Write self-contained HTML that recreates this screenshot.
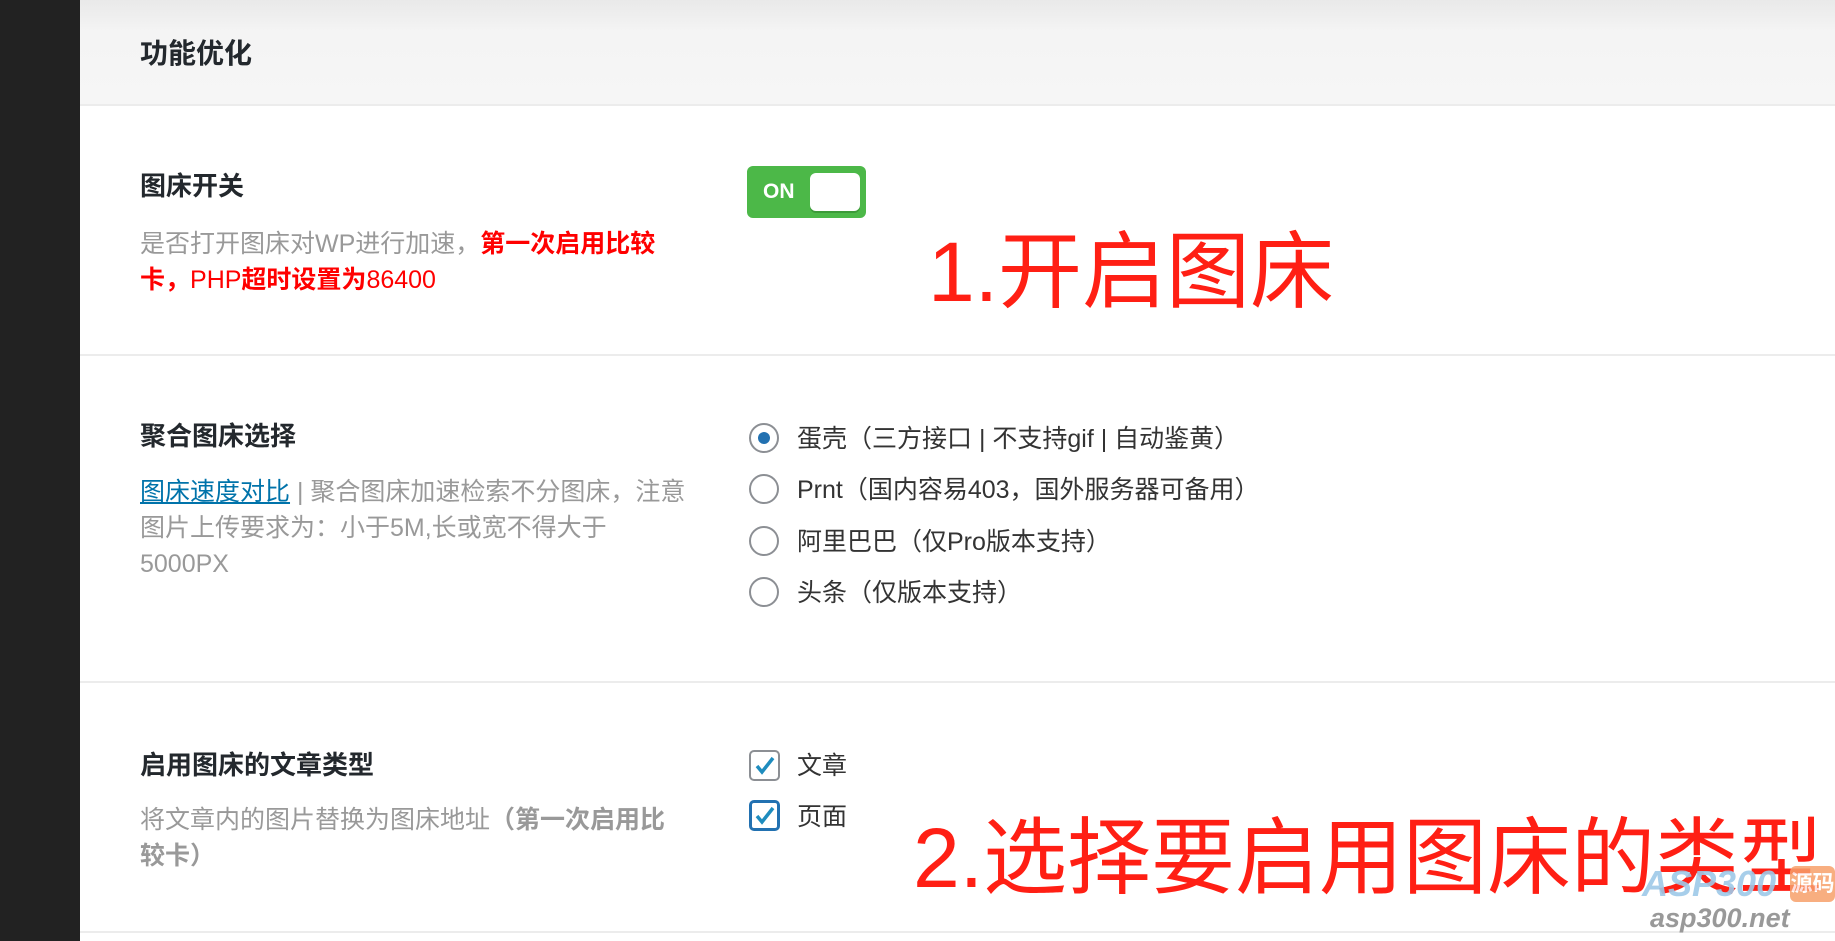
<!DOCTYPE html>
<html><head><meta charset="utf-8"><style>
*{margin:0;padding:0;box-sizing:border-box}
body{width:1835px;height:941px;overflow:hidden;background:#fff;position:relative;font-family:"Liberation Sans","Noto Sans CJK SC",sans-serif;color:#333}
.a{position:absolute;white-space:nowrap}
.sb{left:0;top:0;width:80px;height:941px;background:#222}
.hd{left:80px;top:0;width:1755px;height:105px;background:linear-gradient(#e9e9e9,#f4f4f4 30%,#f6f6f6)}
.hr{left:80px;width:1755px;height:2px;background:#ececec}
.lbl{font-size:26px;font-weight:bold;color:#23282d;left:140px;line-height:30px}
.desc{font-size:25px;color:#999;left:140px;line-height:36px;width:546px;white-space:normal}
.red{color:#f00;font-weight:bold}
.big{color:#ff1f14;font-size:84px;line-height:100px}
.radio{width:30px;height:30px;border:2px solid #8c8f94;border-radius:50%;left:749px;background:#fff}
.opt{font-size:25px;color:#333;left:797px;line-height:30px}
.cb{width:31px;height:31px;border-radius:5px;left:749px;background:#fff}
</style></head><body>
<div class="a sb"></div>
<div class="a hd"></div>
<div class="a" style="left:140px;top:37px;font-size:28px;font-weight:bold;color:#23282d;line-height:34px">功能优化</div>
<div class="a hr" style="top:104px"></div>

<div class="a lbl" style="top:171px">图床开关</div>
<div class="a desc" style="top:226px">是否打开图床对WP进行加速，<span class="red">第一次启用比较卡，</span><span style="color:#f00">PHP</span><span class="red">超时设置为</span><span style="color:#f00">86400</span></div>
<div class="a" style="left:747px;top:166px;width:119px;height:52px;background:#4cb848;border-radius:6px"></div>
<div class="a" style="left:763px;top:179px;color:#fff;font-size:21px;font-weight:bold;line-height:26px">ON</div>
<div class="a" style="left:810px;top:173px;width:50px;height:38px;background:#fff;border-radius:6px;box-shadow:0 2px 0 #3c9a39"></div>
<div class="a big" style="left:928px;top:222px">1.开启图床</div>
<div class="a hr" style="top:354px"></div>

<div class="a lbl" style="top:421px">聚合图床选择</div>
<div class="a desc" style="top:474px"><span style="color:#0073aa;text-decoration:underline">图床速度对比</span> | 聚合图床加速检索不分图床，注意图片上传要求为：小于5M,长或宽不得大于5000PX</div>
<div class="a radio" style="top:423px"></div>
<div class="a" style="left:758px;top:432px;width:12px;height:12px;border-radius:50%;background:#2271b1"></div>
<div class="a opt" style="top:424px">蛋壳（三方接口 | 不支持gif | 自动鉴黄）</div>
<div class="a radio" style="top:474px"></div>
<div class="a opt" style="top:475px">Prnt（国内容易403，国外服务器可备用）</div>
<div class="a radio" style="top:526px"></div>
<div class="a opt" style="top:527px">阿里巴巴（仅Pro版本支持）</div>
<div class="a radio" style="top:577px"></div>
<div class="a opt" style="top:578px">头条（仅版本支持）</div>
<div class="a hr" style="top:681px"></div>

<div class="a lbl" style="top:750px">启用图床的文章类型</div>
<div class="a desc" style="top:802px">将文章内的图片替换为图床地址<span style="font-weight:bold">（第一次启用比较卡）</span></div>
<div class="a cb" style="top:750px;border:2px solid #8c8f94"></div>
<svg class="a" style="left:753px;top:754px" width="24" height="24" viewBox="0 0 24 24"><path d="M4 12l5 6L20 4" fill="none" stroke="#1e8cbe" stroke-width="3.5"/></svg>
<div class="a opt" style="top:751px">文章</div>
<div class="a cb" style="top:800px;border:3px solid #2271b1"></div>
<svg class="a" style="left:753px;top:804px" width="24" height="24" viewBox="0 0 24 24"><path d="M4 12l5 6L20 4" fill="none" stroke="#1e8cbe" stroke-width="3.5"/></svg>
<div class="a opt" style="top:802px">页面</div>
<div class="a big" style="left:913px;top:808px">2.选择要启用图床的类型</div>
<div class="a hr" style="top:931px"></div>

<div class="a" style="left:1790px;top:866px;width:45px;height:36px;background:#f7a06a;border-radius:6px;opacity:.85;color:#fff;font-size:22px;font-weight:bold;line-height:36px;text-align:center">源码</div>
<div class="a" style="left:1642px;top:862px;font-size:36px;font-weight:bold;font-style:italic;color:#9ec9e8;line-height:44px;opacity:.9">ASP300</div>
<div class="a" style="left:1650px;top:902px;font-size:27px;font-style:italic;font-weight:bold;color:#999;line-height:32px">asp300.net</div>
</body></html>
